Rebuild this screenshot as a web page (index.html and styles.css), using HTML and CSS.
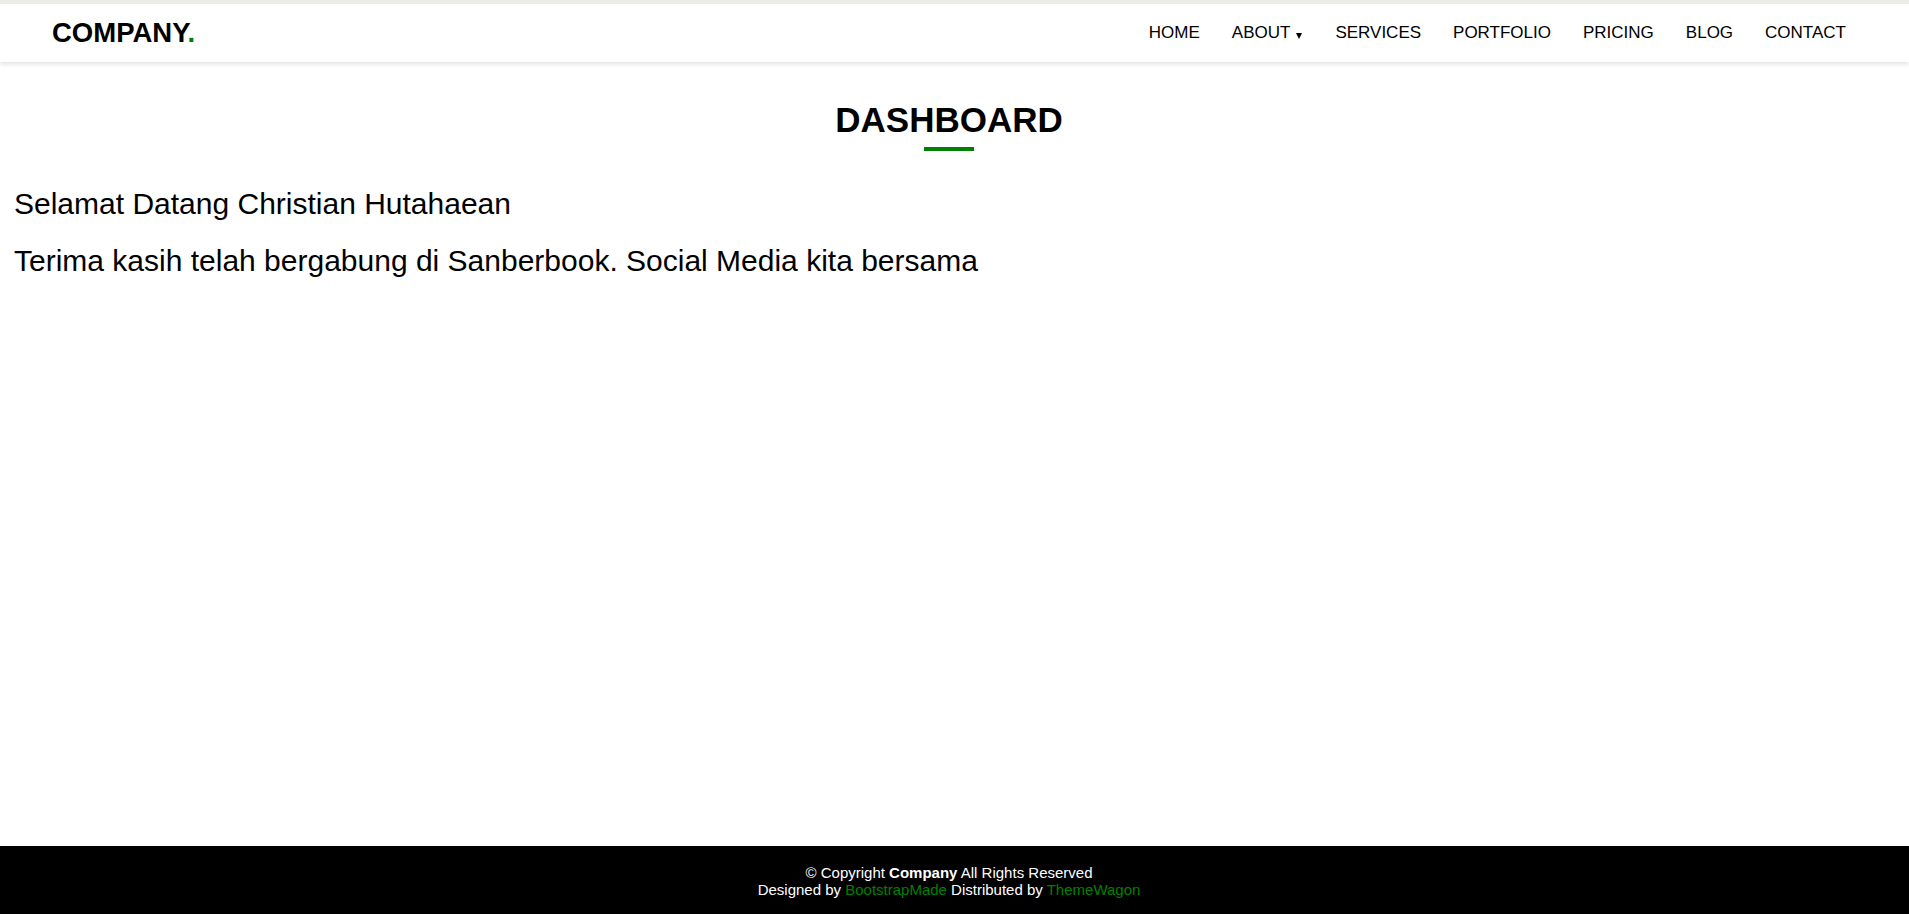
FILE: index.html
```html
<!DOCTYPE html>
<html lang="id">
<head>
<meta charset="utf-8">
<title>Dashboard</title>
<link rel="stylesheet" href="styles.css">
</head>
<body>
<header class="header">
  <a class="logo" href="#">COMPANY<span class="logo-dot">.</span></a>
  <nav class="nav">
    <a href="#">HOME</a>
    <a href="#">ABOUT<span class="caret"></span></a>
    <a href="#">SERVICES</a>
    <a href="#">PORTFOLIO</a>
    <a href="#">PRICING</a>
    <a href="#">BLOG</a>
    <a href="#">CONTACT</a>
  </nav>
</header>
<main class="main">
  <section class="title">
    <h2>DASHBOARD</h2>
    <div class="title-line"></div>
  </section>
  <section class="content">
    <p>Selamat Datang Christian Hutahaean</p>
    <p>Terima kasih telah bergabung di Sanberbook. Social Media kita bersama</p>
  </section>
</main>
<footer class="footer">
  <div>&copy; Copyright <strong>Company</strong> All Rights Reserved</div>
  <div>Designed by <a href="#">BootstrapMade</a> Distributed by <a href="#">ThemeWagon</a></div>
</footer>
</body>
</html>
```
FILE: styles.css
```css
* { box-sizing: border-box; }
html, body { height: 100%; }
body {
  margin: 0;
  font-family: "Liberation Sans", Arial, sans-serif;
  color: #000;
  background: #fff;
  display: flex;
  flex-direction: column;
  min-height: 100vh;
  border-top: 4px solid #ecebe4;
}
a { text-decoration: none; color: inherit; }

.header {
  height: 58px;
  display: flex;
  align-items: center;
  justify-content: space-between;
  padding: 0 47px 0 52px;
  background: #fff;
  box-shadow: 0 2px 5px rgba(0,0,0,0.12);
  position: relative;
  z-index: 2;
  flex-shrink: 0;
}
.logo {
  font-size: 27.5px;
  font-weight: bold;
  color: #000;
}
.logo-dot { color: #008000; }
.nav { display: flex; align-items: center; }
.nav a {
  font-size: 17px;
  padding: 0 16px;
  color: #000;
  display: flex;
  align-items: center;
}
.caret {
  display: inline-block;
  width: 0;
  height: 0;
  border-left: 3.5px solid transparent;
  border-right: 3.5px solid transparent;
  border-top: 6px solid #000;
  margin-left: 6px;
  margin-right: 1px;
  margin-top: 5px;
}

.main { flex: 1; }
.title {
  text-align: center;
  padding: 38px 11px 0 0;
  display: flex;
  flex-direction: column;
  align-items: center;
}
.title h2 {
  margin: 0;
  font-size: 35px;
  line-height: 40px;
  font-weight: bold;
}
.title-line {
  width: 50px;
  height: 4px;
  background: #008000;
  margin-top: 7px;
}
.content {
  padding: 36px 0 0 14px;
}
.content p {
  margin: 0 0 23px;
  font-size: 30px;
  line-height: 34px;
}

.footer {
  background: #000;
  color: #fff;
  height: 68px;
  flex-shrink: 0;
  text-align: center;
  font-size: 15px;
  line-height: 17px;
  padding: 18px 11px 0 0;
}
.footer a { color: #008000; }
```
